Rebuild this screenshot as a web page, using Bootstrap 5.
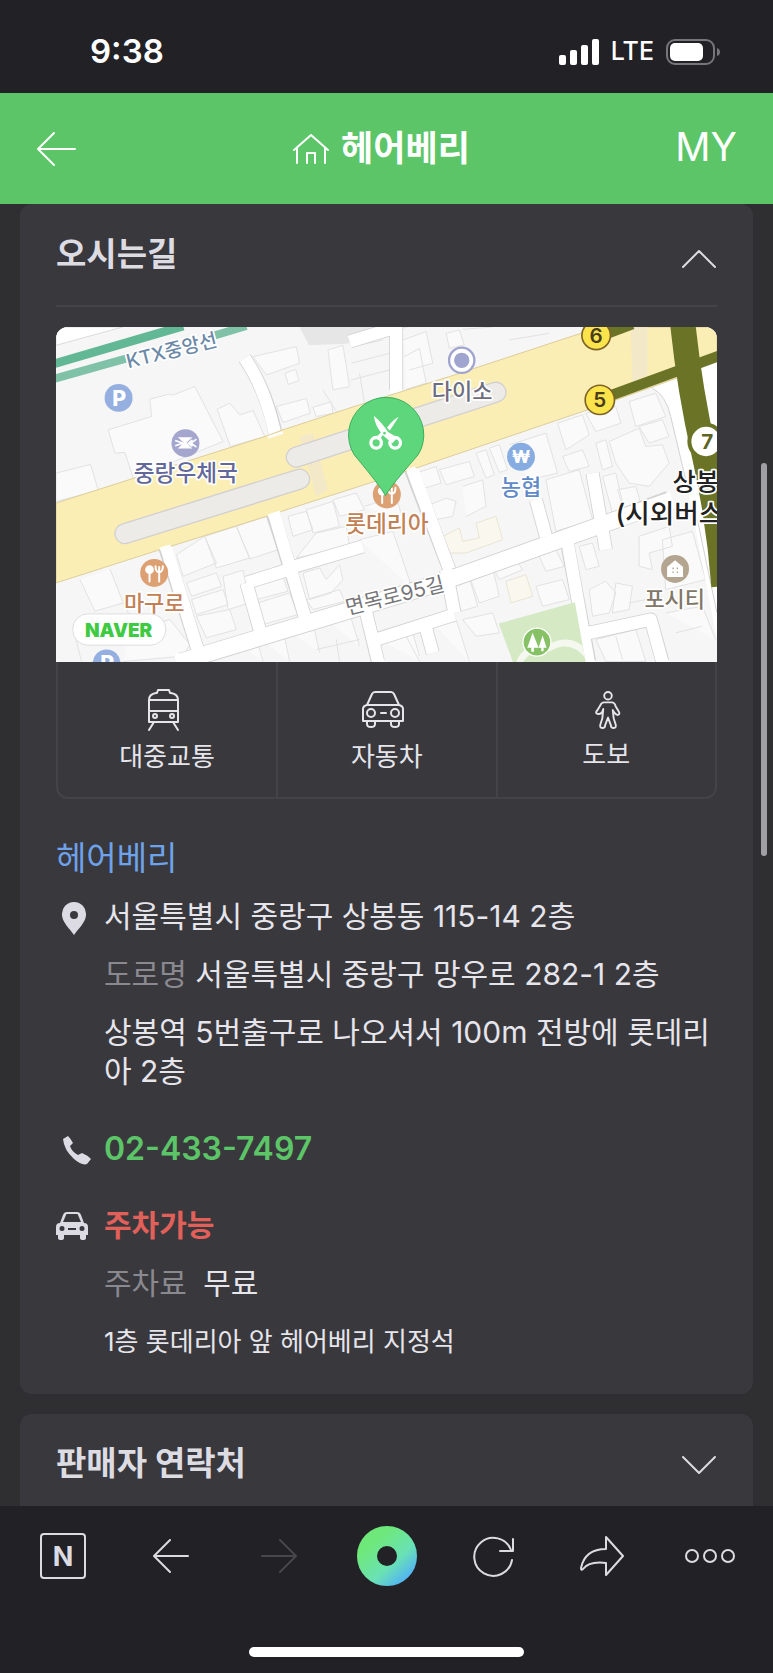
<!DOCTYPE html>
<html lang="ko">
<head>
<meta charset="utf-8">
<meta name="viewport" content="width=device-width, initial-scale=1">
<title>헤어베리</title>
<link href="https://cdn.jsdelivr.net/npm/bootstrap@5.3.0/dist/css/bootstrap.min.css" rel="stylesheet">
<style>
  body { background: #2f2f31; color: #e6e5eb; font-family: Inter, "Noto Sans CJK KR", sans-serif; font-size: 30px; line-height: 39px; }
  svg { display: block; flex: none; }
  .line-icon { fill: none; stroke: currentColor; stroke-width: 2; stroke-linecap: round; stroke-linejoin: round; }
  .chrome-bar { background: #222126; color: #fff; }
  .status-bar { height: 93px; padding: 10px 52px 0 90px; }
  .clock { font-size: 33px; font-weight: 600; }
  .network { font-size: 25px; font-weight: 500; margin: 0 12px; }
  .shop-bar { background: #5cc568; height: 111px; padding: 0 36px; color: #fff; }
  .shop-title { font-size: 35px; font-weight: 700; gap: 12px; }
  .back-slot { width: 70px; }
  .my-slot { width: 80px; }
  .my-link { font-size: 39px; font-weight: 400; }
  .panel { background: #39383d; border-radius: 12px; padding: 0 36px; }
  .panel-open { padding-bottom: 33px; }
  .panel-last { border-radius: 12px 12px 0 0; margin-top: 20px; }
  .panel-head { height: 101px; font-size: 33px; font-weight: 700; color: #dddce2; background: none; border: 0; }
  .panel-last .panel-head { height: 92px; padding: 6px 0 0; }
  .rule { height: 2px; background: #444348; margin-bottom: 20px; }
  .map { border-radius: 12px 12px 0 0; overflow: hidden; background: #fbfbfb; }
  .map svg { width: 100%; height: auto; }
  .map text { font-family: Inter, "Noto Sans CJK KR", sans-serif; text-anchor: middle; }
  .halo { paint-order: stroke; stroke: #fff; stroke-width: 10px; stroke-linejoin: round; }
  .modes { border: 2px solid #444348; border-top: 0; border-radius: 0 0 12px 12px; height: 137px; }
  .modes button { background: none; border: 0; color: #e6e5eb; font-size: 26px; line-height: 36px; padding: 4px 0 0; gap: 8px; }
  .modes button + button { border-left: 2px solid #444348; }
  .shop-name { color: #6ea2ea; font-size: 33px; line-height: 48px; margin: 35px 0 15px; }
  .info-row { gap: 12px; }
  .info-row .icon-slot { width: 36px; height: 39px; color: #dcdbe3; flex: none; }
  .info-lines { gap: 19px; }
  .info-gap { margin-top: 38px; }
  .faded { color: #8a898f; }
  .phone { color: #5cc568; font-size: 32px; font-weight: 600; }
  .parking { color: #e2605a; font-weight: 700; }
  .note { font-size: 26px; }
  .scroll-thumb { top: 259px; right: 6px; width: 6px; height: 393px; background: #a09fa3; }
  .tool-bar { height: 167px; padding: 20px 9px 16px; }
  .tool-bar button { background: none; border: 0; color: #dcdbe1; height: 60px; }
  .tool-bar button:disabled { color: #48474c; }
  .home-line { width: 275px; height: 10px; background: #fff; }
</style>
</head>
<body>
<div class="min-vh-100 d-flex flex-column">

  <div class="chrome-bar status-bar d-flex align-items-center justify-content-between">
    <div class="clock">9:38</div>
    <div class="d-flex align-items-center">
      <svg width="40" height="26" viewBox="0 0 40 26" fill="#fff"><rect x="0" y="16" width="7" height="10" rx="2"/><rect x="11" y="11" width="7" height="15" rx="2"/><rect x="22" y="6" width="7" height="20" rx="2"/><rect x="33" y="0" width="7" height="26" rx="2"/></svg>
      <span class="network">LTE</span>
      <svg width="55" height="26" viewBox="0 0 55 26"><rect x="1" y="1" width="47" height="24" rx="8" fill="none" stroke="#77767b" stroke-width="2"/><rect x="4" y="4" width="33" height="18" rx="5" fill="#fff"/><path d="M51 9q3 1 3 4t-3 4z" fill="#77767b"/></svg>
    </div>
  </div>

  <header class="shop-bar d-flex align-items-center justify-content-between">
    <a href="#" class="back-slot text-white" aria-label="뒤로"><svg class="line-icon" width="40" height="36" viewBox="0 0 40 36"><path d="M18 2 2 18l16 16M2 18h37"/></svg></a>
    <a href="#" class="d-flex align-items-center text-white text-decoration-none shop-title">
      <svg class="line-icon" width="36" height="32" viewBox="0 0 36 32"><path d="M1 17 18 2l17 15M4 15v15M32 15v15M14 30V20h8v10"/></svg>헤어베리</a>
    <a href="#" class="my-slot pb-1 text-end text-white text-decoration-none my-link">MY</a>
  </header>

  <main class="position-relative flex-grow-1 d-flex flex-column px-3">
    <section class="panel panel-open mx-1">
      <button type="button" class="panel-head w-100 p-0 d-flex align-items-center justify-content-between" aria-expanded="true">
        <span>오시는길</span>
        <svg class="line-icon mt-2" width="36" height="20" viewBox="0 0 36 20"><path d="M2 18 18 2l16 16"/></svg>
      </button>
      <div class="rule"></div>

      <div class="map">
        <svg viewBox="18 21 1986 1008" role="img" aria-label="지도">
          <defs><clipPath id="park"><path d="M1348 912 1577 848 1610 1030H1392z"/></clipPath></defs>
          <rect x="18" y="21" width="1986" height="1008" fill="#f6f6f6"/>
          <!-- railway -->
          <path d="M18 21h200L18 76z" fill="#fff" stroke="#ccc" stroke-width="2"/>
          <path d="M750 21h330l-190 50-112 5z" fill="#e6e6e6"/>
          <path d="M0 135 400 18" stroke="#62b795" stroke-width="26"/>
          <path d="M0 180 228 116M495 46 590 18" stroke="#7fc2a8" stroke-width="24"/>
          <!-- buildings -->
          <g fill="#fafafa" stroke="#e2e2e2" stroke-width="3">
            <path d="M175 330 305 290 300 238 360 222 368 226 435 200 520 365 250 475 225 398 195 400z"/>
            <path d="M18 460 122 434 145 512 18 545z"/>
            <path d="M502 268 540 250 570 285 610 272 645 350 542 380z"/>
            <path d="M610 110 740 80 750 130 650 165zM706 160 738 148 748 182 716 194zM680 260 770 236 782 280 700 308zM790 262 845 246 850 280 800 290zM835 90 880 76 900 200 850 210zM908 80 1000 60M905 130 1020 100M930 160 945 250M905 180 1020 150M820 210 870 290"/>
            <path d="M90 780 135 875 220 850 180 748M220 850 240 890M380 705 465 650 500 730 400 770zM465 650 560 620 600 715 500 745zM560 620 650 590 685 690 600 718zM410 790 500 760 515 800 425 830zM425 840 520 810 535 855 440 885zM520 770 580 752 600 850 535 870zM440 890 540 870 560 930 470 955z"/>
            <path d="M610 800 700 770 715 815 620 840zM625 850 720 820 745 885 640 915zM760 760 810 745 830 780 870 735 880 780 845 820 780 840zM770 840 870 810 885 845 790 870zM715 590 770 575 790 630 730 650zM770 570 850 545 870 620 790 640zM850 540 920 520 945 570 870 590zM800 640 890 620 900 680 740 715z"/>
            <path d="M930 660 1030 635 1090 810M945 560 1040 530 1060 600M560 970 620 955 640 1026M630 955 700 930 720 1026M715 930 790 910 810 1000M830 900 900 880 930 980M800 990 930 960M860 960 870 1026M1010 960 1090 940 1110 1010M70 930 95 1026M240 935 360 900 420 975 400 1010 220 1026"/>
            <path d="M1060 60 1130 35 1150 130 1080 150M1065 110 1110 85 1130 190 1070 208M1190 40 1230 30 1245 75 1200 85zM1240 28 1330 21M1380 60 1500 40M1130 560 1190 535 1220 545 1210 590 1160 600zM1100 460 1160 440 1175 490 1110 510zM1170 450 1260 425 1275 470 1190 495zM1280 400 1310 390 1335 465 1310 475zM1320 385 1350 375 1375 450 1350 458z"/>
            <path d="M1240 500 1300 480 1310 560 1250 590M1380 375 1490 340 1525 460 1440 480M1525 310 1600 285 1620 345 1550 390zM1610 280 1700 260 1715 310 1640 335zM1740 245 1820 220 1850 290 1760 320zM1640 370 1670 360 1690 440 1660 450zM1680 365 1770 325 1790 380 1840 375 1860 430 1800 500 1740 490 1700 430zM1770 320 1840 300 1860 350 1800 370z"/>
            <path d="M1490 480 1590 450 1630 600 1520 635zM1540 410 1600 390 1620 440 1560 455zM1660 470 1700 460 1725 570 1690 580zM1705 510 1760 500 1780 570 1730 585zM1770 650 1860 620 1870 680 1800 700 1810 750 1770 740zM1840 660 1930 635 1970 780 1850 810z"/>
            <path d="M1210 790 1260 775 1285 860 1235 875zM1260 770 1330 745 1350 830 1290 850zM1330 740 1400 720 1420 750 1350 780zM1470 710 1520 690 1545 740 1490 755zM1460 800 1540 780 1560 840 1480 860zM1590 680 1630 670 1650 740 1610 750zM1620 810 1670 785 1700 820 1680 880 1630 890zM1700 790 1750 800 1740 870 1690 880zM1740 850 1840 830M1640 960 1760 930 1790 1026H1670zM1700 950 1720 1020M1850 880 1960 860 2000 960M1880 940 1960 920M1160 920 1220 900 1260 1026M1240 900 1330 880 1350 940 1280 950zM1010 970 1070 950 1110 1026"/>
          </g>
          <g fill="#faf7ee" stroke="#eae4d5" stroke-width="3"><path d="M1170 655 1230 625 1240 665 1290 655 1280 610 1340 590 1360 660 1250 700 1180 700z"/><path d="M1370 785 1430 765 1450 830 1385 850z"/></g>
          <!-- side streets -->
          <g fill="none" stroke-linejoin="round">
            <g stroke="#d2d2d2" stroke-width="42">
              <path d="M345 680 445 995M668 575 768 900M720 745 940 680M1085 450 1200 750M1040 21V210M900 65 1030 25M585 115Q650 210 680 350M1190 750 1215 880M980 960 1215 885M1125 910 1150 1000M1550 650 1620 1026M1630 460 1670 690M1460 540 1490 650M1620 940 1805 900 1840 1026M590 790 630 930M590 790 710 752M950 880 985 1026"/>
            </g>
            <path d="M395 1026 1170 790 1700 600 1860 540" stroke="#d2d2d2" stroke-width="54"/>
            <g stroke="#fff" stroke-width="37">
              <path d="M345 670 445 995M668 565 768 900M720 745 940 680M590 790 710 752M1085 440 1200 750M1040 15V220M900 65 1030 25M585 115Q650 210 680 360M1190 750 1215 880M980 960 1215 885M1125 910 1150 1000M1550 640 1620 1036M1630 460 1670 690M1460 540 1490 650M1620 940 1805 900 1842 1036M590 790 630 930M950 880 988 1036"/>
            </g>
            <path d="M380 1030 1170 790 1700 600 1870 540" stroke="#fff" stroke-width="49"/>
          </g>
          <path d="M1810 205Q1850 225 1865 290L1915 500 2004 960V100L1890 170z" fill="#fff"/>
          <path d="M1810 205Q1850 225 1865 290L1915 500M1945 600 2004 880" fill="none" stroke="#d2d2d2" stroke-width="3"/>
          <!-- park -->
          <g clip-path="url(#park)"><path d="M1340 830h280v200h-280z" fill="#d4e9c4"/><path d="M1410 1030q20-50 90-45 70-40 120 30" fill="none" stroke="#f4f8ef" stroke-width="20"/></g>
          <!-- avenue -->
          <path d="M18 550 300 460 655 347 700 330 920 258 1200 170 1610 35 1650 21H2004V120L1890 172 1700 240 1600 275 1090 448 960 490 720 567 650 590 330 690 18 790z" fill="#faeeb5" stroke="#dccd9c" stroke-width="3"/>
          <path d="M655 352 700 338M330 688 362 678M655 588 692 576M1072 452 1098 444" stroke="#fff" stroke-width="8"/>
          <path d="M750 350 790 340 835 510 800 530zM1745 21h50v145l-45 20z" fill="#efe6cf" opacity=".7"/>
          <g fill="none" stroke-linecap="round"><path d="M225 642 750 478M740 412 1340 217" stroke="#d2d0d0" stroke-width="64"/><path d="M225 642 750 478M740 412 1340 217" stroke="#ecebe8" stroke-width="56"/></g>
          <!-- subway line 7 and its exits -->
          <path d="M1900 0Q1920 200 1965 400T2025 800" fill="none" stroke="#6b7426" stroke-width="76"/>
          <path d="M1680 228 2010 108M1670 42 1750 12" stroke="#6b7426" stroke-width="32"/>
          <g font-size="62" font-weight="600" fill="#493d1c">
            <circle cx="1641" cy="46" r="43" fill="#fbe34b" stroke="#7c6326" stroke-width="5"/><text x="1641" y="68">6</text>
            <circle cx="1652" cy="240" r="44" fill="#fbe34b" stroke="#7c6326" stroke-width="5"/><text x="1652" y="262">5</text>
            <circle cx="1971" cy="365" r="50" fill="#fff" stroke="#6b7426" stroke-width="12"/><text x="1975" y="388" fill="#5b6420" font-weight="700">7</text>
          </g>
          <!-- place markers -->
          <g font-size="64" font-weight="800" fill="#fff"><circle cx="206" cy="234" r="42" fill="#94afe0"/><text x="208" y="257">P</text><circle cx="170" cy="1032" r="42" fill="#94afe0"/><text x="172" y="1055">P</text></g>
          <circle cx="407" cy="370" r="42" fill="#a4a6ce"/><path d="M384 352h44l-18 17 18 17h-44l18-17z" fill="#fff"/><path d="M376 362 400 370 376 378M440 358l-16 12 16 12M428 360l-12 10 12 10" fill="none" stroke="#fff" stroke-width="5"/>
          <circle cx="1237" cy="121" r="38" fill="#fff" stroke="#a0a5cf" stroke-width="7"/><circle cx="1237" cy="121" r="23" fill="#a0a5cf"/>
          <circle cx="1415" cy="411" r="42" fill="#86ace2"/><text x="1415" y="430" font-size="52" font-weight="800" fill="#fff">₩</text>
          <circle cx="313" cy="760" r="42" fill="#dda073"/>
          <g id="fork"><circle cx="299" cy="750" r="13" fill="#fff"/><path d="M299 750v36M328 742v44M317 740q0 18 11 18t11-18" fill="none" stroke="#fff" stroke-width="6" stroke-linecap="round"/></g>
          <circle cx="1012" cy="524" r="42" fill="#dda073"/><use href="#fork" x="699" y="-236"/>
          <circle cx="1463" cy="968" r="42" fill="#86c265" stroke="#fff" stroke-width="4"/><path d="M1450 940 1434 985h12v12h8v-12h14zM1480 948l-12 37h8v10h7v-10h9z" fill="#fff"/>
          <circle cx="1878" cy="748" r="42" fill="#b3a58f"/><path d="M1854 742 1878 722 1902 742V772H1854z" fill="#fff"/><path d="M1870 746h4M1883 746h4M1870 758h4M1883 758h4" stroke="#b3a58f" stroke-width="5"/>
          <!-- place names -->
          <g class="halo" font-size="66" font-weight="500">
            <text x="365" y="112" font-size="58" fill="#6c89a8" transform="rotate(-14 365 90)">KTX중앙선</text>
            <text x="408" y="484" font-size="68" fill="#62689a">중랑우체국</text>
            <text x="1238" y="236" fill="#6d6d7d">다이소</text>
            <text x="1415" y="527" fill="#6089c8">농협</text>
            <text x="1012" y="638" font-size="68" fill="#c28155">롯데리아</text>
            <text x="313" y="874" fill="#c28155">마구로</text>
            <text x="1877" y="862" fill="#827769">포시티</text>
            <text x="1036" y="850" font-size="62" font-weight="400" fill="#77777a" transform="rotate(-14 1036 828)">면목로95길</text>
            <text x="1940" y="514" font-size="76" fill="#222">상봉</text>
            <text x="1861" y="610" font-size="80" fill="#222">(시외버스</text>
          </g>
          <rect x="68" y="883" width="280" height="94" rx="46" fill="#fff" stroke="#ddd" stroke-width="3"/>
          <text x="206" y="951" font-size="57" font-weight="900" fill="#3fca43">NAVER</text>
          <!-- salon pin -->
          <path d="M1008 528Q992 498 914 405A113 113 0 1 1 1106 405Q1024 498 1008 528z" fill="#5ed67c" stroke="#3aae5b" stroke-width="3"/>
          <g fill="none" stroke="#fff" stroke-width="10"><circle cx="980" cy="369" r="16"/><circle cx="1037" cy="369" r="16"/></g>
          <path d="M973 288Q1000 312 1015 336L1044 354 1028 370 1000 346Q976 318 973 288zM1048 291 1021 332 1012 324Q1028 302 1048 291zM1001 343 989 362 978 354 994 338z" fill="#fff"/>
          <circle cx="1005" cy="340" r="4" fill="#5ed67c"/>
        </svg>
      </div>
      <div class="modes d-flex">
        <button type="button" class="flex-fill w-100 d-flex flex-column align-items-center justify-content-center">
          <svg class="line-icon me-2" width="32" height="42" viewBox="0 0 32 42"><path d="M9 4q-7 1-7 7v22h29V11q0-6-7-7M9 4h1l1-3h11l1 3h1M2 11h29M2 22h29M7 33 2 41M26 33l5 8"/><circle cx="8" cy="27" r="2"/><circle cx="25" cy="27" r="2"/></svg>
          <span>대중교통</span></button>
        <button type="button" class="flex-fill w-100 d-flex flex-column align-items-center justify-content-center">
          <svg class="line-icon me-2" width="42" height="42" viewBox="0 0 42 42"><path d="M5 16 10 5q1-2 3-2h16q2 0 3 2l5 11M5 16q-4 1-4 4v12h40V20q0-3-4-4zM5 32v3q0 3 4 3t4-3v-3M29 32v3q0 3 4 3t4-3v-3M19 24h5"/><circle cx="9" cy="24" r="4"/><circle cx="33" cy="24" r="4"/></svg>
          <span>자동차</span></button>
        <button type="button" class="flex-fill w-100 d-flex flex-column align-items-center justify-content-center">
          <svg class="line-icon ms-1" width="26" height="38" viewBox="0 0 26 40"><circle cx="13" cy="5" r="4"/><path d="M9 12h8q3 0 4 4l3 5q2 3 0 4t-5-3l-1-2 1 9 2 6q1 4-2 4t-3-3l-3-8-3 8q0 3-3 3t-2-4l2-6 1-10-1 3q-2 3-5 2t0-4l3-5q1-3 4-3z"/></svg>
          <span>도보</span></button>
      </div>

      <h2 class="shop-name fw-normal">헤어베리</h2>

      <div class="info-row d-flex">
        <span class="icon-slot d-flex align-items-center justify-content-center pt-1"><svg width="26" height="33" viewBox="0 0 26 33" fill="currentColor"><path fill-rule="evenodd" d="M13 0a12 12 0 0 0-12 13c0 7 8 14 12 20 4-6 12-13 12-20A12 12 0 0 0 13 0zm0 9a4 4 0 1 1 0 8 4 4 0 0 1 0-8z"/></svg></span>
        <div class="info-lines d-flex flex-column flex-fill">
          <div>서울특별시 중랑구 상봉동 115-14 2층</div>
          <div><span class="faded">도로명</span> 서울특별시 중랑구 망우로 282-1 2층</div>
          <div>상봉역 5번출구로 나오셔서 100m 전방에 롯데리아 2층</div>
        </div>
      </div>
      <div class="info-row info-gap d-flex">
        <span class="icon-slot d-flex align-items-center justify-content-end pt-1"><svg width="30" height="30" viewBox="0 0 30 30" fill="currentColor"><path d="M1 3 6 0Q9 3 11 7L8 10Q10 16 16 19L20 17Q25 19 29 23L25 28Q20 30 12 23 2 14 1 3z"/></svg></span>
        <a href="tel:02-433-7497" class="phone text-decoration-none">02-433-7497</a>
      </div>
      <div class="info-row info-gap d-flex">
        <span class="icon-slot d-flex align-items-center"><svg width="32" height="28" viewBox="0 0 32 28" fill="currentColor"><path fill-rule="evenodd" d="M4 11 7 3q1-3 4-3h10q3 0 4 3l3 8q4 0 4 4v8h-2v3q0 2-3 2t-3-2v-3H8v3q0 2-3 2t-3-2v-3H0v-8q0-4 4-4zm3-1h18l-3-7q0-1-1-1H11q-1 0-1 1zM6 14a2 2 0 1 0 0 5 2 2 0 0 0 0-5zm20 0a2 2 0 1 0 0 5 2 2 0 0 0 0-5zM12 16v2h8v-2z"/></svg></span>
        <div class="info-lines d-flex flex-column flex-fill">
          <div class="parking">주차가능</div>
          <div><span class="faded me-2">주차료</span> 무료</div>
          <div class="note">1층 롯데리아 앞 헤어베리 지정석</div>
        </div>
      </div>
    </section>

    <section class="panel panel-last flex-grow-1 mx-1">
      <button type="button" class="panel-head w-100 d-flex align-items-center justify-content-between" aria-expanded="false">
        <span>판매자 연락처</span>
        <svg class="line-icon mt-1" width="36" height="20" viewBox="0 0 36 20"><path d="M2 2 18 18 34 2"/></svg>
      </button>
    </section>
    <div class="scroll-thumb position-absolute rounded-pill"></div>
  </main>

  <footer class="chrome-bar tool-bar d-flex flex-column justify-content-between">
    <nav class="d-flex">
      <button type="button" class="flex-fill w-100 p-0 d-flex align-items-center justify-content-center" aria-label="네이버 홈"><svg width="46" height="46" viewBox="0 0 46 46"><rect x="1" y="1" width="44" height="44" rx="3" fill="none" stroke="currentColor" stroke-width="2"/><text x="23" y="33" text-anchor="middle" font-family="Inter, sans-serif" font-size="27" font-weight="700" fill="currentColor">N</text></svg></button>
      <button type="button" class="flex-fill w-100 p-0 d-flex align-items-center justify-content-center" aria-label="이전"><svg class="line-icon" width="36" height="36" viewBox="0 0 36 36"><path d="M17 2 1 18l16 16M1 18h34"/></svg></button>
      <button type="button" disabled class="flex-fill w-100 p-0 d-flex align-items-center justify-content-center" aria-label="다음"><svg class="line-icon" width="36" height="36" viewBox="0 0 36 36"><path d="M19 2 35 18 19 34M35 18H1"/></svg></button>
      <button type="button" class="flex-fill w-100 p-0 d-flex align-items-center justify-content-center" aria-label="그린닷"><svg width="60" height="60" viewBox="0 0 60 60"><defs><linearGradient id="dot" x1=".2" y1=".1" x2="1" y2="1"><stop offset="0" stop-color="#6ee879"/><stop offset=".6" stop-color="#6ae2b4"/><stop offset="1" stop-color="#55b8ee"/></linearGradient></defs><circle cx="30" cy="30" r="20" fill="none" stroke="url(#dot)" stroke-width="20"/></svg></button>
      <button type="button" class="flex-fill w-100 p-0 d-flex align-items-center justify-content-center" aria-label="새로고침"><svg class="line-icon" width="42" height="42" viewBox="0 0 42 42"><path d="M39 25A19 19 0 1 1 38 15M40 4v12H27"/></svg></button>
      <button type="button" class="flex-fill w-100 p-0 d-flex align-items-center justify-content-center" aria-label="공유"><svg class="line-icon" width="44" height="40" viewBox="0 0 44 40"><path d="M26 1 43 20 26 39V27Q9 25 3 33 1 35 1 32 5 13 26 13z"/></svg></button>
      <button type="button" class="flex-fill w-100 p-0 d-flex align-items-center justify-content-center" aria-label="더보기"><svg class="line-icon" width="50" height="14" viewBox="0 0 50 14"><circle cx="7" cy="7" r="6"/><circle cx="25" cy="7" r="6"/><circle cx="43" cy="7" r="6"/></svg></button>
    </nav>
    <div class="home-line rounded-pill mx-auto"></div>
  </footer>
</div>
<script src="https://cdn.jsdelivr.net/npm/bootstrap@5.3.0/dist/js/bootstrap.bundle.min.js"></script>
</body>
</html>
